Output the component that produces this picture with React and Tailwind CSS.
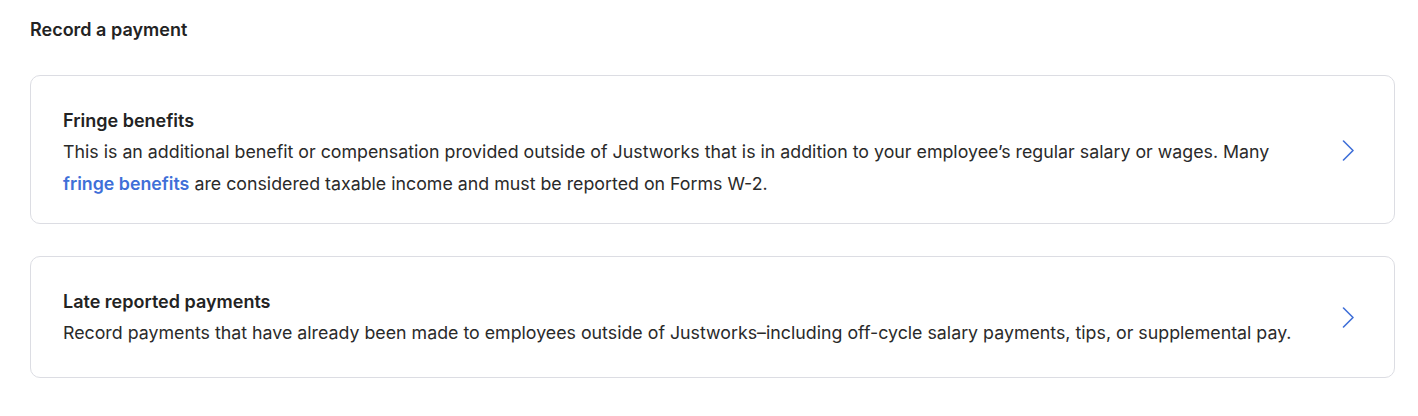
const options = [
  {
    title: "Fringe benefits",
    pad: "pb-[23px]",
    lift: "mb-[8px]",
    body: (
      <>
        This is an additional benefit or compensation provided outside of Justworks that is in addition to your
        employee’s regular salary or wages. Many{" "}
        <a href="#" className="font-semibold text-[#3f6fd8]">
          fringe benefits
        </a>{" "}
        are considered taxable income and must be reported on Forms W-2.
      </>
    ),
  },
  {
    title: "Late reported payments",
    pad: "pb-[28px]",
    lift: "mb-[4px]",
    body: "Record payments that have already been made to employees outside of Justworks–including off-cycle salary payments, tips, or supplemental pay.",
  },
];

function Chevron({ className }) {
  return (
    <svg width="13" height="21" viewBox="0 0 13 21" fill="none" className={`mr-[7px] shrink-0 ${className}`}>
      <path d="M1.5 1 L11 10.5 L1.5 20" stroke="#3f6fd8" strokeWidth="1.6" strokeLinecap="round" strokeLinejoin="round" />
    </svg>
  );
}

export default function App() {
  return (
    <div className="min-h-screen bg-white pl-[30px] pr-[23px] pt-[18px] font-['Inter',sans-serif] text-[#232323]">
      <h1 className="text-[18px] font-semibold leading-[24px]">Record a payment</h1>

      <div className="mt-[33px] flex flex-col gap-[32px]">
        {options.map((o) => (
          <button
            key={o.title}
            className={`flex w-full items-center rounded-[10px] border border-[#dcdde3] bg-white px-8 pt-[33px] text-left ${o.pad}`}
          >
            <div className="flex-1 pr-[40px]">
              <div className="text-[18px] font-semibold leading-[24px]">{o.title}</div>
              <p className="mt-[3px] text-[17.8px] leading-[32px] text-[#2a2a2a]">{o.body}</p>
            </div>
            <Chevron className={o.lift} />
          </button>
        ))}
      </div>
    </div>
  );
}
